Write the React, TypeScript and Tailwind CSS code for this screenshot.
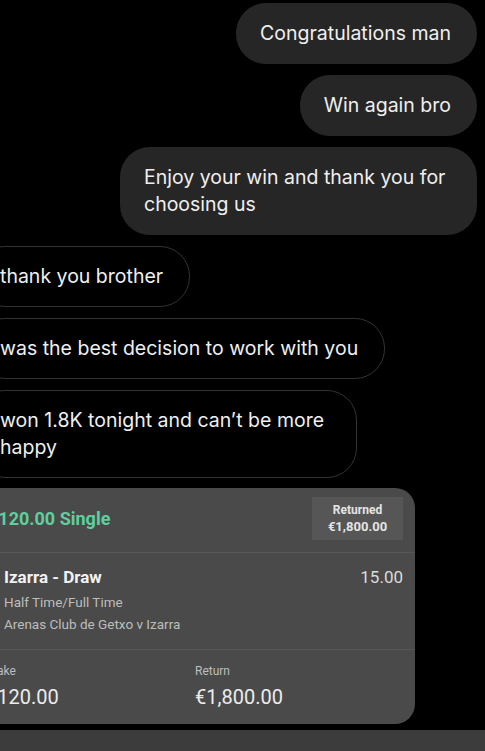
import React from "react";

type Bubble = {
  text: string;
  mine: boolean;
  maxW?: string;
};

const messages: Bubble[] = [
  { text: "Congratulations man", mine: true },
  { text: "Win again bro", mine: true },
  { text: "Enjoy your win and thank you for choosing us", mine: true },
  { text: "thank you brother", mine: false },
  { text: "was the best decision to work with you", mine: false },
  { text: "won 1.8K tonight and can’t be more happy", mine: false, maxW: "max-w-[382px]" },
];

const ChatBubble = ({ text, mine, maxW }: Bubble) => {
  if (mine) {
    return (
      <div className="flex justify-end pr-[8px]">
        <div className="max-w-[357px] rounded-[30px] bg-[#262626] pl-[24px] pr-[26px] py-[17px] text-[19.5px] leading-[27px] text-[#efefef]">
          {text}
        </div>
      </div>
    );
  }
  return (
    <div className="flex justify-start">
      <div
        className={
          "-ml-[25px] rounded-[30px] border border-[#333333] bg-black pl-[24px] pr-[26px] py-[16px] text-[19.5px] leading-[27px] text-[#efefef] " +
          (maxW ?? "max-w-[460px]")
        }
      >
        {text}
      </div>
    </div>
  );
};

const BetCard = () => {
  return (
    <div className="-ml-[28px] w-[443px] rounded-[20px] bg-[#4a4a4a] font-['Roboto',sans-serif]">
      <div className="flex items-center justify-between pl-[16px] pr-[12px] pt-[9px] pb-[12px]">
        <span className="text-[18px] font-bold text-[#5ecf9e]">€120.00 Single</span>
        <div className="flex h-[43px] w-[91px] flex-col items-center justify-center bg-[#565656] text-[#e4e4e4] font-bold">
          <span className="text-[12px] leading-[15px]">Returned</span>
          <span className="text-[13px] leading-[17px]">€1,800.00</span>
        </div>
      </div>
      <div className="border-t border-[#575757] pl-[32px] pr-[12px] pt-[13px] pb-[14px]">
        <div className="flex items-center justify-between">
          <span className="text-[17px] font-bold leading-[22px] text-[#f2f2f2]">Izarra - Draw</span>
          <span className="text-[17px] leading-[22px] text-[#dcdcdc]">15.00</span>
        </div>
        <div className="mt-[3px] text-[13.5px] leading-[22px] text-[#bdbdbd]">Half Time/Full Time</div>
        <div className="text-[13.5px] leading-[22px] text-[#bdbdbd]">Arenas Club de Getxo v Izarra</div>
      </div>
      <div className="grid grid-cols-[209px_1fr] border-t border-[#575757] pl-[14px] pt-[13px] pb-[15px]">
        <div>
          <div className="text-[12px] leading-[16px] text-[#bdbdbd]">Stake</div>
          <div className="mt-[6px] text-[20px] leading-[24px] text-[#ececec]">€120.00</div>
        </div>
        <div>
          <div className="text-[12px] leading-[16px] text-[#bdbdbd]">Return</div>
          <div className="mt-[6px] text-[20px] leading-[24px] text-[#ececec]">€1,800.00</div>
        </div>
      </div>
    </div>
  );
};

export default function App() {
  return (
    <div className="flex h-[751px] w-[485px] flex-col overflow-hidden bg-black font-['Inter',sans-serif]">
      <div className="flex flex-col gap-[11px] pt-[3px]">
        {messages.map((m, i) => (
          <ChatBubble key={i} {...m} />
        ))}
      </div>
      <div className="mt-[10px]">
        <BetCard />
      </div>
      <div className="mt-auto h-[21px] bg-[#3c3c3c]" />
    </div>
  );
}
